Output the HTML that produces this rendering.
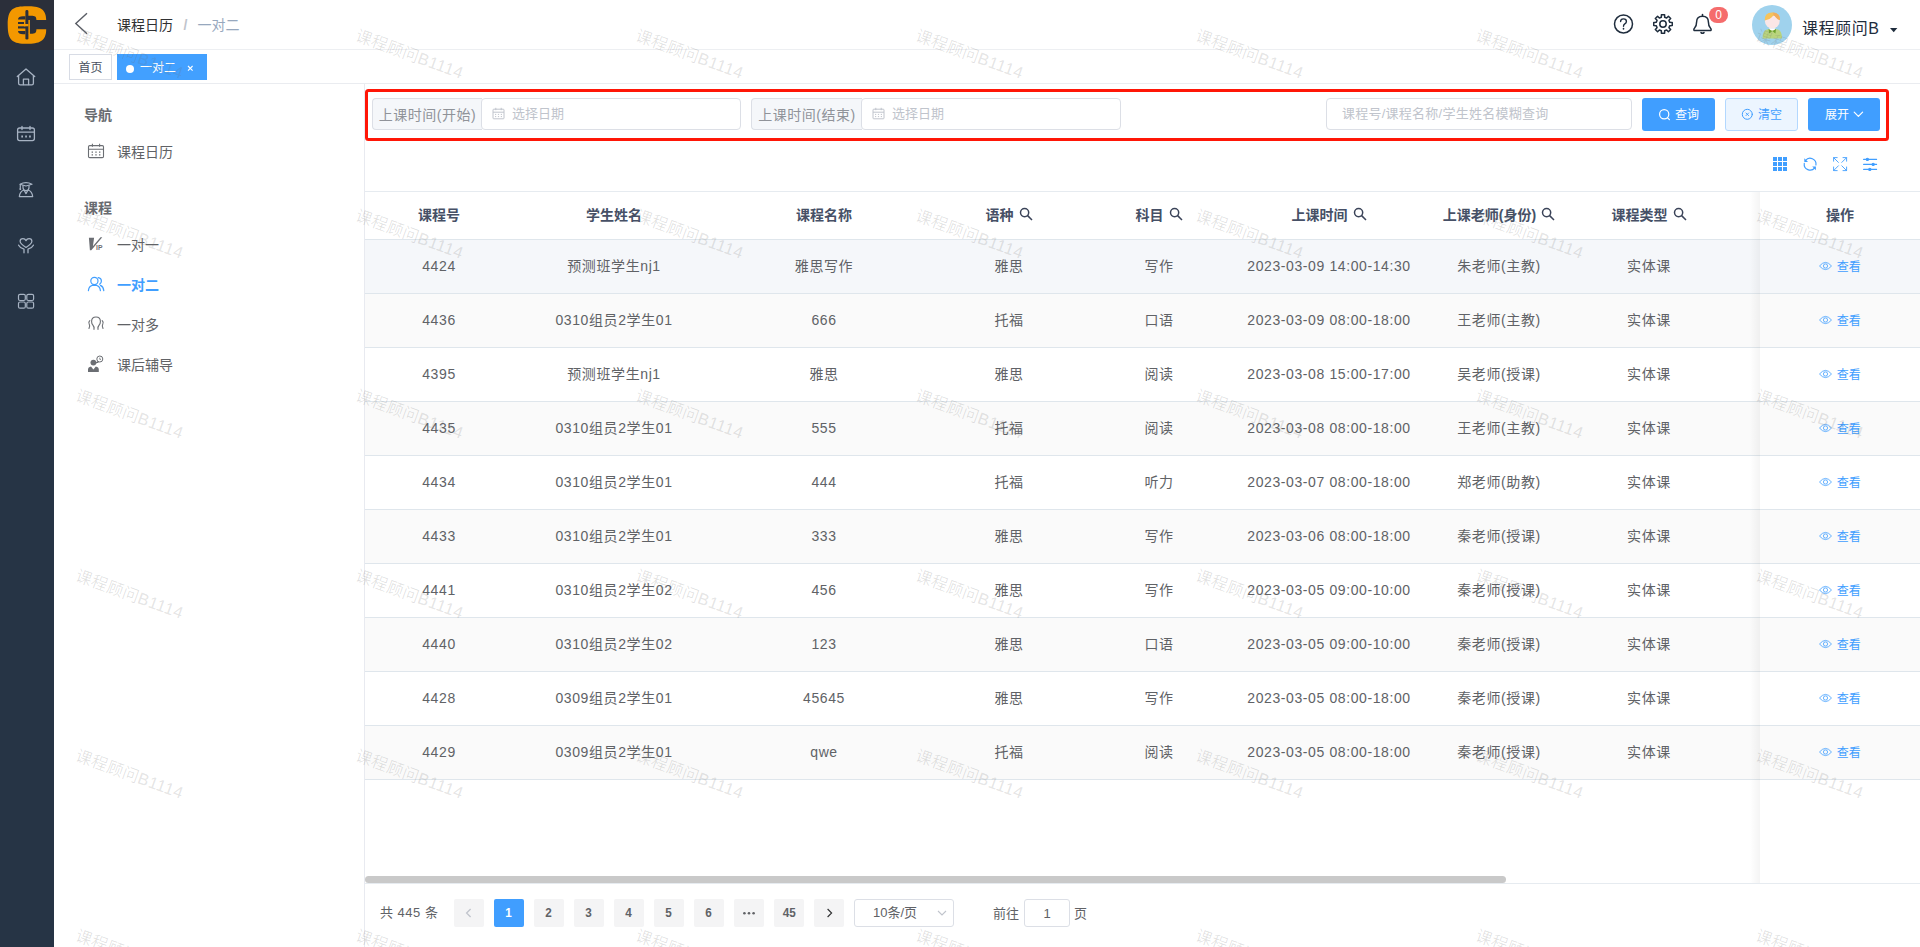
<!DOCTYPE html><html lang="zh-CN"><head><meta charset="utf-8"><title>一对二</title><style>
*{box-sizing:border-box;margin:0;padding:0}
html,body{width:1920px;height:947px;overflow:hidden;background:#fff}
body{position:relative;font-family:"Liberation Sans", "Noto Sans CJK SC", sans-serif;font-size:14px;color:#606266;-webkit-font-smoothing:antialiased}
.a{position:absolute}
.t{position:absolute;white-space:nowrap}
svg{position:absolute;overflow:visible}
.wm{position:absolute;white-space:nowrap;font-size:16.4px;line-height:17px;height:17px;color:rgba(110,110,110,.235);font-weight:300;letter-spacing:.2px;transform-origin:0 0;transform:rotate(20deg);pointer-events:none;z-index:50}
.th{position:absolute;top:192px;height:47px;line-height:47px;font-size:14px;font-weight:700;color:#465066;text-align:center;white-space:nowrap}
.td{position:absolute;height:53px;line-height:53px;font-size:14px;color:#606266;text-align:center;white-space:nowrap;letter-spacing:.6px}
.row{position:absolute;left:365px;width:1555px;height:54px;border-bottom:1px solid #dfe6ec}
.pg{position:absolute;top:899px;width:30px;height:28px;line-height:28px;background:#f4f4f5;border-radius:2px;text-align:center;font-size:13px;font-weight:700;color:#606266}
.mi{position:absolute;left:117px;font-size:14px;line-height:20px;height:20px;color:#606266;white-space:nowrap}
</style></head><body>
<div class="a" style="left:0;top:0;width:54px;height:947px;background:#263445"></div>
<div class="a" style="left:0;top:0;width:54px;height:50px;background:#2b2f3a"></div>
<svg style="left:0;top:0" width="54" height="50" viewBox="0 0 54 50">
<path d="M27 6.3 C39 6.3 46.2 8.5 46.2 20 L36.4 20 C36.4 16.5 35 15.8 31 15.8 L26 15.8 L26 33.8 L31 33.8 C35 33.8 36.4 33 36.4 29.3 L46.2 29.3 C46.2 41.5 39 43.8 27 43.8 C13 43.8 7.7 41 7.7 25 C7.7 9 13 6.3 27 6.3 Z" fill="#f39800"/>
<rect x="25.4" y="10" width="3" height="29.6" rx="1.4" fill="#2b2f3a"/>
<path d="M18 19.5 C18 17 20 16.2 23 16.2 L25.4 16.2 L25.4 19.5 Z" fill="#2b2f3a"/>
<rect x="18" y="22" width="6" height="2" fill="#2b2f3a"/>
<rect x="18" y="26.3" width="9" height="2.2" fill="#2b2f3a"/>
<path d="M18 31 L25.4 31 L25.4 34.2 L23 34.2 C20 34.2 18 33.2 18 31 Z" fill="#2b2f3a"/>
<rect x="28.4" y="20" width="1.5" height="14" fill="#f39800"/>
<rect x="24" y="24" width="4.4" height="2.3" fill="#f39800"/>
</svg>
<svg style="left:16px;top:67px" width="20" height="20" viewBox="16 67 20 20" fill="none" stroke="#a7b3c3" stroke-width="1.3" stroke-linecap="round" stroke-linejoin="round">
<path d="M17.3 76.6 L26 69 L34.7 76.6"/>
<path d="M18.6 75.8 L18.6 83.2 Q18.6 84.8 20.2 84.8 L31.8 84.8 Q33.4 84.8 33.4 83.2 L33.4 75.8"/>
<path d="M23.4 84.6 L23.4 79.2 L28.6 79.2 L28.6 84.6"/>
</svg>
<svg style="left:16px;top:124px" width="20" height="20" viewBox="16 124 20 20" fill="none" stroke="#a7b3c3" stroke-width="1.3" stroke-linecap="round" stroke-linejoin="round">
<rect x="17.6" y="128" width="16.8" height="12.6" rx="2"/>
<path d="M17.6 132.2 L34.4 132.2 M22 126.3 L22 129.6 M30 126.3 L30 129.6"/>
<path d="M21.3 136.5 L23 136.5 M25.2 136.5 L26.9 136.5 M29.1 136.5 L30.8 136.5" stroke-width="1.8" stroke-linecap="butt"/>
</svg>
<svg style="left:16px;top:179px" width="20" height="20" viewBox="16 179 20 20" fill="none" stroke="#a7b3c3" stroke-width="1.2" stroke-linecap="round" stroke-linejoin="round">
<path d="M20 184.2 Q26 181.2 32 184.2 L26 186 Z"/>
<path d="M20.3 184.4 L20.3 188.2" /><rect x="19.5" y="188.2" width="1.6" height="1.8" fill="#a7b3c3" stroke="none"/>
<path d="M23 185.6 L23 187.5 Q23 190.6 26 190.6 Q29 190.6 29 187.5 L29 185.6"/>
<path d="M19.3 196.6 Q19.8 191.4 24 190 L26 193.6 L28 190 Q32.2 191.4 32.7 196.6 Z"/>
</svg>
<svg style="left:16px;top:235px" width="20" height="20" viewBox="16 235 20 20" fill="none" stroke="#a7b3c3" stroke-width="1.3" stroke-linecap="round" stroke-linejoin="round">
<path transform="translate(1.3 13) scale(.95)" d="M26 246.8 C21.4 243.8 19.8 242 19.8 240.2 C19.8 238.4 21.2 237.6 22.8 237.6 C24.2 237.6 25.4 238.4 26 239.6 C26.6 238.4 27.8 237.6 29.2 237.6 C30.8 237.6 32.2 238.4 32.2 240.2 C32.2 242 30.6 243.8 26 246.8 Z"/>
<path d="M18.6 245.2 C19.8 247.6 22 248.6 24 249.2 L24 252.8"/>
<path d="M33.4 245.2 C32.2 247.6 30 248.6 28 249.2 L28 252.8"/>
</svg>
<svg style="left:16px;top:291px" width="20" height="20" viewBox="16 291 20 20" fill="none" stroke="#a7b3c3" stroke-width="1.2">
<rect x="18.5" y="294.3" width="6.8" height="6.2" rx="1.5"/><rect x="26.8" y="294.3" width="6.8" height="6.2" rx="1.5"/>
<rect x="18.5" y="302" width="6.8" height="6.2" rx="1.5"/><rect x="26.8" y="302" width="6.8" height="6.2" rx="1.5"/>
</svg>
<div class="a" style="left:54px;top:49px;width:1866px;height:1px;background:#edeff2"></div>
<svg style="left:70px;top:8px" width="24" height="32" viewBox="70 8 24 32" fill="none" stroke="#5a5e66" stroke-width="1.4"><path d="M87 13.2 L75.8 23.5 L87 33.8"/></svg>
<div class="t" style="left:117px;top:15px;height:20px;line-height:20px;font-size:14px;color:#303133">课程日历</div>
<div class="t" style="left:183.5px;top:15px;height:20px;line-height:20px;font-size:14px;font-weight:700;color:#c0c4cc">/</div>
<div class="t" style="left:197.5px;top:15px;height:20px;line-height:20px;font-size:14px;color:#97a8be">一对二</div>
<svg style="left:1612px;top:12px" width="24" height="24" viewBox="1612 12 24 24" fill="none" stroke="#1f2d3d" stroke-width="1.5" stroke-linecap="round">
<circle cx="1623.5" cy="24" r="9"/>
<path d="M1620.6 21.6 Q1620.6 18.9 1623.5 18.9 Q1626.4 18.9 1626.4 21.4 Q1626.4 22.8 1624.8 23.8 Q1623.5 24.6 1623.5 26.2" stroke-width="1.4"/>
<path d="M1623.5 28.6 L1623.5 29" stroke-width="1.6"/>
</svg>
<svg style="left:1651px;top:12px" width="24" height="24" viewBox="1651 12 24 24" fill="none" stroke="#1f2d3d" stroke-width="1.5" stroke-linejoin="round">
<path d="M1661.36 17.20 L1661.38 14.74 L1664.62 14.74 L1664.64 17.20 L1666.65 18.03 L1668.41 16.31 L1670.69 18.59 L1668.97 20.35 L1669.80 22.36 L1672.26 22.38 L1672.26 25.62 L1669.80 25.64 L1668.97 27.65 L1670.69 29.41 L1668.41 31.69 L1666.65 29.97 L1664.64 30.80 L1664.62 33.26 L1661.38 33.26 L1661.36 30.80 L1659.35 29.97 L1657.59 31.69 L1655.31 29.41 L1657.03 27.65 L1656.20 25.64 L1653.74 25.62 L1653.74 22.38 L1656.20 22.36 L1657.03 20.35 L1655.31 18.59 L1657.59 16.31 L1659.35 18.03 Z"/><circle cx="1663" cy="24" r="3.2"/>
</svg>
<svg style="left:1690px;top:12px" width="24" height="24" viewBox="1690 12 24 24" fill="none" stroke="#1f2d3d" stroke-width="1.5" stroke-linecap="round" stroke-linejoin="round">
<path d="M1702.5 14.4 L1702.5 16"/>
<path d="M1694 30.4 Q1693.4 29.2 1694.6 28 Q1696.6 26 1696.6 22 Q1696.6 16.2 1702.5 16.2 Q1708.4 16.2 1708.4 22 Q1708.4 26 1710.4 28 Q1711.6 29.2 1711 30.4 Z"/>
<path d="M1701 32.6 Q1702.5 34 1704 32.6"/>
</svg>
<div class="a" style="left:1709px;top:7px;width:19px;height:16px;border-radius:8px;background:#f56c6c;color:#fff;font-size:12px;line-height:16px;text-align:center">0</div>
<svg style="left:1752px;top:5px" width="40" height="40" viewBox="0 0 40 40">
<defs><clipPath id="avc"><circle cx="20" cy="20" r="20"/></clipPath></defs>
<circle cx="20" cy="20" r="20" fill="#9fd2ed"/>
<g clip-path="url(#avc)">
<path d="M10.6 33.5 Q10.6 24.6 16 24.2 L24.6 24.2 Q30 24.6 30 33.5 Z" fill="#b9d47d"/>
<path d="M17.2 23.2 L23.4 23.2 L22.6 26.6 L20.3 25.2 L18 26.6 Z" fill="#fff"/>
<path d="M20.3 26 L16.6 24 L17.2 28.6 Z M20.3 26 L24 24 L23.4 28.6 Z" fill="#6ea22c"/>
<circle cx="20.3" cy="16" r="7.4" fill="#fbe6e6"/>
<path d="M12.7 15.4 Q12.4 7.6 20 7.4 Q28 7.2 28 15 Q25.6 14.8 24 12.4 Q22.8 10.8 21.4 10.6 Q17.8 15 12.7 15.4 Z" fill="#f6c35a"/>
<path d="M20.6 7.4 Q28 7.2 28 15 Q25.6 14.8 24 12.4 Q22.8 10.8 21.4 10.6 Q21.6 9 20.6 7.4 Z" fill="#f1ad5c"/>
</g></svg>
<div class="t" style="left:1802px;top:17.5px;height:22px;line-height:22px;font-size:16px;letter-spacing:.55px;color:#1f2d3d">课程顾问B</div>
<svg style="left:1889px;top:27px" width="10" height="6" viewBox="0 0 10 6"><path d="M1 1 L8.4 1 L4.7 5.2 Z" fill="#1f2d3d"/></svg>
<div class="a" style="left:54px;top:83px;width:1866px;height:1px;background:#eaecf0"></div>
<div class="a" style="left:69px;top:54px;width:43px;height:26px;border:1px solid #d8dce5;background:#fff;color:#495060;font-size:12px;line-height:26px;text-align:center">首页</div>
<div class="a" style="left:117px;top:54px;width:90px;height:26px;background:#42a0ff"></div>
<div class="a" style="left:126px;top:64.5px;width:8px;height:8px;border-radius:50%;background:#fff"></div>
<div class="t" style="left:140px;top:56px;height:24px;line-height:24px;font-size:12px;color:#fff">一对二</div>
<svg style="left:186px;top:64px" width="9" height="9" viewBox="0 0 9 9" stroke="#fff" stroke-width="1.1" fill="none"><path d="M2 2 L6.6 6.6 M6.6 2 L2 6.6"/></svg>
<div class="a" style="left:364px;top:84px;width:1px;height:863px;background:#e8eaf0"></div>
<div class="t" style="left:84px;top:105px;height:20px;line-height:20px;font-size:14px;font-weight:700;color:#686b70">导航</div>
<div class="t" style="left:84px;top:198px;height:20px;line-height:20px;font-size:14px;font-weight:700;color:#686b70">课程</div>
<svg style="left:86px;top:141px" width="20" height="20" viewBox="86 141 20 20" fill="none" stroke="#6b6e73" stroke-width="1.1">
<rect x="88.5" y="145.6" width="15" height="12" rx="1.2"/>
<path d="M88.5 149.3 L103.5 149.3 M92.4 143.8 L92.4 146.8 M99.6 143.8 L99.6 146.8"/>
<path d="M91.6 152.2 L93 152.2 M95.3 152.2 L96.7 152.2 M99 152.2 L100.4 152.2 M91.6 154.9 L93 154.9 M95.3 154.9 L96.7 154.9 M99 154.9 L100.4 154.9" stroke-width="1.2"/>
</svg>
<div class="mi" style="top:141.5px">课程日历</div>
<svg style="left:86px;top:235px" width="20" height="18" viewBox="86 235 20 18">
<path d="M88.9 237.7 L94.1 237.7 L92.9 246.2 L100.5 237.3 L102.3 237.3 L91.3 250.3 L89.9 250.3 Z" fill="#6b6e73"/>
<text x="96" y="250.2" font-size="6.8" font-weight="700" fill="#6b6e73" style="font-family:'Liberation Sans',sans-serif">IP</text>
</svg>
<div class="mi" style="top:235px">一对一</div>
<svg style="left:86px;top:275px" width="20" height="18" viewBox="86 275 20 18" fill="none" stroke="#409eff" stroke-width="1.2" stroke-linecap="round">
<circle cx="94.4" cy="281" r="3.6"/>
<path d="M88.4 290.6 Q88.8 285.4 94.4 285.2 Q100 285.4 100.4 290.6"/>
<path d="M98.2 277.6 Q101.4 278 101.4 281 Q101.4 283.2 99.6 284.2"/>
<path d="M100.4 285.4 Q103.4 286.6 103.8 290.6"/>
</svg>
<div class="mi" style="top:275px;color:#409eff;font-weight:700">一对二</div>
<svg style="left:86px;top:314px" width="20" height="18" viewBox="86 314 20 18" fill="none" stroke="#6b6e73" stroke-width="1.1" stroke-linecap="round">
<path d="M94 329.4 Q94.4 326.6 92.8 325 Q91.6 323.6 91.6 321.4 Q91.6 317 96 317 Q100.4 317 100.4 321.4 Q100.4 323.6 99.2 325 Q97.6 326.6 98 329.4"/>
<path d="M89.8 320.6 Q88.2 322 89.2 324 Q90.4 326 89 328.4"/>
<path d="M102.2 320.6 Q103.8 322 102.8 324 Q101.6 326 103 328.4"/>
</svg>
<div class="mi" style="top:315px">一对多</div>
<svg style="left:86px;top:354px" width="20" height="20" viewBox="86 354 20 20">
<circle cx="93.4" cy="362.6" r="2.9" fill="#6b6e73"/>
<path d="M88 372 L88 369.6 Q88 367 91 366.4 L93.4 369.6 L95.8 366.4 Q98.8 367 98.8 369.6 L98.8 372 Z" fill="#6b6e73"/>
<circle cx="99.8" cy="359" r="3" fill="none" stroke="#6b6e73" stroke-width="1"/>
<path d="M97.6 361.2 L96.2 363 L98.8 362" fill="none" stroke="#6b6e73" stroke-width="1"/>
<path d="M99.8 357.6 L99.8 359.4 L101 359.4" fill="none" stroke="#6b6e73" stroke-width=".8"/>
</svg>
<div class="mi" style="top:355px">课后辅导</div>
<div class="a" style="left:372px;top:98px;width:110px;height:32px;background:#f5f7fa;border:1px solid #dcdfe6;border-right:0;border-radius:4px 0 0 4px;color:#909399;font-size:14px;line-height:33px;text-align:center;white-space:nowrap;letter-spacing:.5px">上课时间(开始)</div>
<div class="a" style="left:481px;top:98px;width:260px;height:32px;background:#fff;border:1px solid #dcdfe6;border-radius:4px"></div>
<svg style="left:492px;top:107px" width="13" height="13" viewBox="0 0 13 13" fill="none" stroke="#c0c4cc" stroke-width="1">
<rect x="1" y="2.2" width="11" height="9.6" rx=".8"/><path d="M1 5.2 L12 5.2 M3.8 .8 L3.8 3.2 M9.2 .8 L9.2 3.2"/>
<path d="M3 7.4 L4.2 7.4 M5.9 7.4 L7.1 7.4 M8.8 7.4 L10 7.4 M3 9.6 L4.2 9.6 M5.9 9.6 L7.1 9.6 M8.8 9.6 L10 9.6" stroke-width="1"/></svg>
<div class="t" style="left:512px;top:104px;height:20px;line-height:20px;font-size:13px;color:#c0c4cc">选择日期</div>
<div class="a" style="left:751px;top:98px;width:111px;height:32px;background:#f5f7fa;border:1px solid #dcdfe6;border-right:0;border-radius:4px 0 0 4px;color:#909399;font-size:14px;line-height:33px;text-align:center;white-space:nowrap;letter-spacing:.5px">上课时间(结束)</div>
<div class="a" style="left:861px;top:98px;width:260px;height:32px;background:#fff;border:1px solid #dcdfe6;border-radius:4px"></div>
<svg style="left:872px;top:107px" width="13" height="13" viewBox="0 0 13 13" fill="none" stroke="#c0c4cc" stroke-width="1">
<rect x="1" y="2.2" width="11" height="9.6" rx=".8"/><path d="M1 5.2 L12 5.2 M3.8 .8 L3.8 3.2 M9.2 .8 L9.2 3.2"/>
<path d="M3 7.4 L4.2 7.4 M5.9 7.4 L7.1 7.4 M8.8 7.4 L10 7.4 M3 9.6 L4.2 9.6 M5.9 9.6 L7.1 9.6 M8.8 9.6 L10 9.6" stroke-width="1"/></svg>
<div class="t" style="left:892px;top:104px;height:20px;line-height:20px;font-size:13px;color:#c0c4cc">选择日期</div>
<div class="a" style="left:1326px;top:98px;width:306px;height:32px;background:#fff;border:1px solid #dcdfe6;border-radius:4px"></div>
<div class="t" style="left:1342px;top:104px;height:20px;line-height:20px;font-size:13px;letter-spacing:.25px;color:#c0c4cc">课程号/课程名称/学生姓名模糊查询</div>
<div class="a" style="left:1642px;top:98px;width:73px;height:33px;background:#409eff;border-radius:3px"></div>
<svg style="left:1658px;top:108px" width="13" height="13" viewBox="0 0 13 13" fill="none" stroke="#fff" stroke-width="1.2" stroke-linecap="round"><circle cx="6.2" cy="6.2" r="4.6"/><path d="M9.6 9.8 L11.4 11.6"/></svg>
<div class="t" style="left:1675px;top:105px;height:20px;line-height:20px;font-size:12px;color:#fff">查询</div>
<div class="a" style="left:1725px;top:98px;width:73px;height:33px;background:#ecf5ff;border:1px solid #b3d8ff;border-radius:3px"></div>
<svg style="left:1741px;top:108px" width="13" height="13" viewBox="0 0 13 13" fill="none" stroke="#409eff" stroke-width="1" stroke-linecap="round"><circle cx="6.3" cy="6.3" r="5"/><path d="M5 5 L7.6 7.6 M7.6 5 L5 7.6" stroke-width=".9"/></svg>
<div class="t" style="left:1758px;top:105px;height:20px;line-height:20px;font-size:12px;color:#409eff">清空</div>
<div class="a" style="left:1808px;top:98px;width:72px;height:33px;background:#409eff;border-radius:3px"></div>
<div class="t" style="left:1825px;top:105px;height:20px;line-height:20px;font-size:12px;color:#fff">展开</div>
<svg style="left:1853px;top:110px" width="11" height="8" viewBox="0 0 11 8" fill="none" stroke="#fff" stroke-width="1.2" stroke-linecap="round" stroke-linejoin="round"><path d="M1.2 2.2 L5.4 6.4 L9.6 2.2"/></svg>
<svg style="left:0;top:0;z-index:60" width="1920" height="947" viewBox="0 0 1920 947" fill="none"><rect x="366.5" y="90.5" width="1521" height="49" rx="2" stroke="#ff1607" stroke-width="3"/></svg>
<svg style="left:0;top:0" width="1920" height="200" viewBox="0 0 1920 200" fill="#409eff"><rect x="1773" y="157" width="4" height="4"/><rect x="1778" y="157" width="4" height="4"/><rect x="1783" y="157" width="4" height="4"/><rect x="1773" y="162" width="4" height="4"/><rect x="1778" y="162" width="4" height="4"/><rect x="1783" y="162" width="4" height="4"/><rect x="1773" y="167" width="4" height="4"/><rect x="1778" y="167" width="4" height="4"/><rect x="1783" y="167" width="4" height="4"/></svg>
<svg style="left:1802px;top:156px" width="16" height="16" viewBox="1802 156 16 16" fill="none" stroke="#409eff" stroke-width="1.15" stroke-linecap="round">
<path d="M1805.45 160.57 A5.9 5.9 0 0 1 1815.94 165.02"/>
<path d="M1804.26 163.38 A5.9 5.9 0 0 0 1814.75 167.83"/>
<path d="M1804.3 158.2 L1804.3 161.9 L1808 161.9 Z" fill="#409eff" stroke="none"/>
<path d="M1812.2 166.5 L1815.9 166.5 L1815.9 170.2 Z" fill="#409eff" stroke="none"/>
</svg>
<svg style="left:1832px;top:156px" width="16" height="16" viewBox="1832 156 16 16" fill="none" stroke="#409eff" stroke-width=".9" stroke-linecap="round">
<path d="M1833.7 157.7 L1838.4 162.4 M1846.5 157.7 L1841.8 162.4 M1833.7 170.5 L1838.4 165.8 M1846.5 170.5 L1841.8 165.8"/>
<path d="M1833.6 161.2 L1833.6 157.6 L1837.2 157.6 M1843 157.6 L1846.6 157.6 L1846.6 161.2 M1833.6 167 L1833.6 170.6 L1837.2 170.6 M1843 170.6 L1846.6 170.6 L1846.6 167"/>
</svg>
<svg style="left:1862px;top:156px" width="16" height="16" viewBox="1862 156 16 16" fill="#409eff" stroke="#409eff" stroke-width="1.1" stroke-linecap="round">
<path d="M1863.6 159.4 L1876.6 159.4 M1863.6 164.4 L1876.6 164.4 M1863.6 169.4 L1876.6 169.4"/>
<circle cx="1867.4" cy="159.4" r="1.1"/><circle cx="1873.2" cy="164.4" r="1.1"/><circle cx="1869.8" cy="169.4" r="1.1"/>
</svg>
<div class="a" style="left:365px;top:191px;width:1555px;height:1px;background:#e6ebf0"></div>
<div class="a" style="left:365px;top:239px;width:1555px;height:1px;background:#dfe6ec"></div>
<div class="row" style="top:240px;background:#f5f7fa"></div>
<div class="row" style="top:294px;background:#fafafa"></div>
<div class="row" style="top:348px;background:#fff"></div>
<div class="row" style="top:402px;background:#fafafa"></div>
<div class="row" style="top:456px;background:#fff"></div>
<div class="row" style="top:510px;background:#fafafa"></div>
<div class="row" style="top:564px;background:#fff"></div>
<div class="row" style="top:618px;background:#fafafa"></div>
<div class="row" style="top:672px;background:#fff"></div>
<div class="row" style="top:726px;background:#fafafa"></div>
<div class="th" style="left:364px;width:150px">课程号</div>
<div class="td" style="left:364px;top:240px;width:150px">4424</div>
<div class="td" style="left:364px;top:294px;width:150px">4436</div>
<div class="td" style="left:364px;top:348px;width:150px">4395</div>
<div class="td" style="left:364px;top:402px;width:150px">4435</div>
<div class="td" style="left:364px;top:456px;width:150px">4434</div>
<div class="td" style="left:364px;top:510px;width:150px">4433</div>
<div class="td" style="left:364px;top:564px;width:150px">4441</div>
<div class="td" style="left:364px;top:618px;width:150px">4440</div>
<div class="td" style="left:364px;top:672px;width:150px">4428</div>
<div class="td" style="left:364px;top:726px;width:150px">4429</div>
<div class="th" style="left:514px;width:200px">学生姓名</div>
<div class="td" style="left:514px;top:240px;width:200px">预测班学生nj1</div>
<div class="td" style="left:514px;top:294px;width:200px">0310组员2学生01</div>
<div class="td" style="left:514px;top:348px;width:200px">预测班学生nj1</div>
<div class="td" style="left:514px;top:402px;width:200px">0310组员2学生01</div>
<div class="td" style="left:514px;top:456px;width:200px">0310组员2学生01</div>
<div class="td" style="left:514px;top:510px;width:200px">0310组员2学生01</div>
<div class="td" style="left:514px;top:564px;width:200px">0310组员2学生02</div>
<div class="td" style="left:514px;top:618px;width:200px">0310组员2学生02</div>
<div class="td" style="left:514px;top:672px;width:200px">0309组员2学生01</div>
<div class="td" style="left:514px;top:726px;width:200px">0309组员2学生01</div>
<div class="th" style="left:714px;width:220px">课程名称</div>
<div class="td" style="left:714px;top:240px;width:220px">雅思写作</div>
<div class="td" style="left:714px;top:294px;width:220px">666</div>
<div class="td" style="left:714px;top:348px;width:220px">雅思</div>
<div class="td" style="left:714px;top:402px;width:220px">555</div>
<div class="td" style="left:714px;top:456px;width:220px">444</div>
<div class="td" style="left:714px;top:510px;width:220px">333</div>
<div class="td" style="left:714px;top:564px;width:220px">456</div>
<div class="td" style="left:714px;top:618px;width:220px">123</div>
<div class="td" style="left:714px;top:672px;width:220px">45645</div>
<div class="td" style="left:714px;top:726px;width:220px">qwe</div>
<div class="th" style="left:934px;width:150px">语种<svg style="position:relative;display:inline-block;vertical-align:middle;margin-left:5px;top:-2.5px" width="14" height="14" viewBox="0 0 14 14" fill="none" stroke="#3a4358" stroke-width="1.5"><circle cx="5.6" cy="5.6" r="4.1"/><path d="M8.6 8.6 L13 13"/></svg></div>
<div class="td" style="left:934px;top:240px;width:150px">雅思</div>
<div class="td" style="left:934px;top:294px;width:150px">托福</div>
<div class="td" style="left:934px;top:348px;width:150px">雅思</div>
<div class="td" style="left:934px;top:402px;width:150px">托福</div>
<div class="td" style="left:934px;top:456px;width:150px">托福</div>
<div class="td" style="left:934px;top:510px;width:150px">雅思</div>
<div class="td" style="left:934px;top:564px;width:150px">雅思</div>
<div class="td" style="left:934px;top:618px;width:150px">雅思</div>
<div class="td" style="left:934px;top:672px;width:150px">雅思</div>
<div class="td" style="left:934px;top:726px;width:150px">托福</div>
<div class="th" style="left:1084px;width:150px">科目<svg style="position:relative;display:inline-block;vertical-align:middle;margin-left:5px;top:-2.5px" width="14" height="14" viewBox="0 0 14 14" fill="none" stroke="#3a4358" stroke-width="1.5"><circle cx="5.6" cy="5.6" r="4.1"/><path d="M8.6 8.6 L13 13"/></svg></div>
<div class="td" style="left:1084px;top:240px;width:150px">写作</div>
<div class="td" style="left:1084px;top:294px;width:150px">口语</div>
<div class="td" style="left:1084px;top:348px;width:150px">阅读</div>
<div class="td" style="left:1084px;top:402px;width:150px">阅读</div>
<div class="td" style="left:1084px;top:456px;width:150px">听力</div>
<div class="td" style="left:1084px;top:510px;width:150px">写作</div>
<div class="td" style="left:1084px;top:564px;width:150px">写作</div>
<div class="td" style="left:1084px;top:618px;width:150px">口语</div>
<div class="td" style="left:1084px;top:672px;width:150px">写作</div>
<div class="td" style="left:1084px;top:726px;width:150px">阅读</div>
<div class="th" style="left:1234px;width:190px">上课时间<svg style="position:relative;display:inline-block;vertical-align:middle;margin-left:5px;top:-2.5px" width="14" height="14" viewBox="0 0 14 14" fill="none" stroke="#3a4358" stroke-width="1.5"><circle cx="5.6" cy="5.6" r="4.1"/><path d="M8.6 8.6 L13 13"/></svg></div>
<div class="td" style="left:1234px;top:240px;width:190px">2023-03-09 14:00-14:30</div>
<div class="td" style="left:1234px;top:294px;width:190px">2023-03-09 08:00-18:00</div>
<div class="td" style="left:1234px;top:348px;width:190px">2023-03-08 15:00-17:00</div>
<div class="td" style="left:1234px;top:402px;width:190px">2023-03-08 08:00-18:00</div>
<div class="td" style="left:1234px;top:456px;width:190px">2023-03-07 08:00-18:00</div>
<div class="td" style="left:1234px;top:510px;width:190px">2023-03-06 08:00-18:00</div>
<div class="td" style="left:1234px;top:564px;width:190px">2023-03-05 09:00-10:00</div>
<div class="td" style="left:1234px;top:618px;width:190px">2023-03-05 09:00-10:00</div>
<div class="td" style="left:1234px;top:672px;width:190px">2023-03-05 08:00-18:00</div>
<div class="td" style="left:1234px;top:726px;width:190px">2023-03-05 08:00-18:00</div>
<div class="th" style="left:1424px;width:150px">上课老师(身份)<svg style="position:relative;display:inline-block;vertical-align:middle;margin-left:5px;top:-2.5px" width="14" height="14" viewBox="0 0 14 14" fill="none" stroke="#3a4358" stroke-width="1.5"><circle cx="5.6" cy="5.6" r="4.1"/><path d="M8.6 8.6 L13 13"/></svg></div>
<div class="td" style="left:1424px;top:240px;width:150px">朱老师(主教)</div>
<div class="td" style="left:1424px;top:294px;width:150px">王老师(主教)</div>
<div class="td" style="left:1424px;top:348px;width:150px">吴老师(授课)</div>
<div class="td" style="left:1424px;top:402px;width:150px">王老师(主教)</div>
<div class="td" style="left:1424px;top:456px;width:150px">郑老师(助教)</div>
<div class="td" style="left:1424px;top:510px;width:150px">秦老师(授课)</div>
<div class="td" style="left:1424px;top:564px;width:150px">秦老师(授课)</div>
<div class="td" style="left:1424px;top:618px;width:150px">秦老师(授课)</div>
<div class="td" style="left:1424px;top:672px;width:150px">秦老师(授课)</div>
<div class="td" style="left:1424px;top:726px;width:150px">秦老师(授课)</div>
<div class="th" style="left:1574px;width:150px">课程类型<svg style="position:relative;display:inline-block;vertical-align:middle;margin-left:5px;top:-2.5px" width="14" height="14" viewBox="0 0 14 14" fill="none" stroke="#3a4358" stroke-width="1.5"><circle cx="5.6" cy="5.6" r="4.1"/><path d="M8.6 8.6 L13 13"/></svg></div>
<div class="td" style="left:1574px;top:240px;width:150px">实体课</div>
<div class="td" style="left:1574px;top:294px;width:150px">实体课</div>
<div class="td" style="left:1574px;top:348px;width:150px">实体课</div>
<div class="td" style="left:1574px;top:402px;width:150px">实体课</div>
<div class="td" style="left:1574px;top:456px;width:150px">实体课</div>
<div class="td" style="left:1574px;top:510px;width:150px">实体课</div>
<div class="td" style="left:1574px;top:564px;width:150px">实体课</div>
<div class="td" style="left:1574px;top:618px;width:150px">实体课</div>
<div class="td" style="left:1574px;top:672px;width:150px">实体课</div>
<div class="td" style="left:1574px;top:726px;width:150px">实体课</div>
<div class="a" style="left:1750px;top:192px;width:10px;height:692px;background:linear-gradient(90deg,rgba(0,0,0,0),rgba(0,0,0,.045))"></div>
<div class="a" style="left:1760px;top:192px;width:160px;height:47px;background:#fff"></div>
<div class="a" style="left:1760px;top:780px;width:160px;height:103px;background:#fff"></div>
<div class="th" style="left:1760px;width:160px">操作</div>
<div class="td" style="left:1760px;top:240px;width:160px;font-size:12px;color:#409eff;letter-spacing:0;line-height:55px"><svg style="position:relative;display:inline-block;vertical-align:middle;margin-right:4.5px;top:-1.5px" width="13" height="10" viewBox="0 0 13 10" fill="none" stroke="#409eff" stroke-width=".8"><path d="M.5 5 Q6.5 -2.2 12.5 5 Q6.5 12.2 .5 5 Z"/><circle cx="6.5" cy="5" r="2.1"/></svg>查看</div>
<div class="td" style="left:1760px;top:294px;width:160px;font-size:12px;color:#409eff;letter-spacing:0;line-height:55px"><svg style="position:relative;display:inline-block;vertical-align:middle;margin-right:4.5px;top:-1.5px" width="13" height="10" viewBox="0 0 13 10" fill="none" stroke="#409eff" stroke-width=".8"><path d="M.5 5 Q6.5 -2.2 12.5 5 Q6.5 12.2 .5 5 Z"/><circle cx="6.5" cy="5" r="2.1"/></svg>查看</div>
<div class="td" style="left:1760px;top:348px;width:160px;font-size:12px;color:#409eff;letter-spacing:0;line-height:55px"><svg style="position:relative;display:inline-block;vertical-align:middle;margin-right:4.5px;top:-1.5px" width="13" height="10" viewBox="0 0 13 10" fill="none" stroke="#409eff" stroke-width=".8"><path d="M.5 5 Q6.5 -2.2 12.5 5 Q6.5 12.2 .5 5 Z"/><circle cx="6.5" cy="5" r="2.1"/></svg>查看</div>
<div class="td" style="left:1760px;top:402px;width:160px;font-size:12px;color:#409eff;letter-spacing:0;line-height:55px"><svg style="position:relative;display:inline-block;vertical-align:middle;margin-right:4.5px;top:-1.5px" width="13" height="10" viewBox="0 0 13 10" fill="none" stroke="#409eff" stroke-width=".8"><path d="M.5 5 Q6.5 -2.2 12.5 5 Q6.5 12.2 .5 5 Z"/><circle cx="6.5" cy="5" r="2.1"/></svg>查看</div>
<div class="td" style="left:1760px;top:456px;width:160px;font-size:12px;color:#409eff;letter-spacing:0;line-height:55px"><svg style="position:relative;display:inline-block;vertical-align:middle;margin-right:4.5px;top:-1.5px" width="13" height="10" viewBox="0 0 13 10" fill="none" stroke="#409eff" stroke-width=".8"><path d="M.5 5 Q6.5 -2.2 12.5 5 Q6.5 12.2 .5 5 Z"/><circle cx="6.5" cy="5" r="2.1"/></svg>查看</div>
<div class="td" style="left:1760px;top:510px;width:160px;font-size:12px;color:#409eff;letter-spacing:0;line-height:55px"><svg style="position:relative;display:inline-block;vertical-align:middle;margin-right:4.5px;top:-1.5px" width="13" height="10" viewBox="0 0 13 10" fill="none" stroke="#409eff" stroke-width=".8"><path d="M.5 5 Q6.5 -2.2 12.5 5 Q6.5 12.2 .5 5 Z"/><circle cx="6.5" cy="5" r="2.1"/></svg>查看</div>
<div class="td" style="left:1760px;top:564px;width:160px;font-size:12px;color:#409eff;letter-spacing:0;line-height:55px"><svg style="position:relative;display:inline-block;vertical-align:middle;margin-right:4.5px;top:-1.5px" width="13" height="10" viewBox="0 0 13 10" fill="none" stroke="#409eff" stroke-width=".8"><path d="M.5 5 Q6.5 -2.2 12.5 5 Q6.5 12.2 .5 5 Z"/><circle cx="6.5" cy="5" r="2.1"/></svg>查看</div>
<div class="td" style="left:1760px;top:618px;width:160px;font-size:12px;color:#409eff;letter-spacing:0;line-height:55px"><svg style="position:relative;display:inline-block;vertical-align:middle;margin-right:4.5px;top:-1.5px" width="13" height="10" viewBox="0 0 13 10" fill="none" stroke="#409eff" stroke-width=".8"><path d="M.5 5 Q6.5 -2.2 12.5 5 Q6.5 12.2 .5 5 Z"/><circle cx="6.5" cy="5" r="2.1"/></svg>查看</div>
<div class="td" style="left:1760px;top:672px;width:160px;font-size:12px;color:#409eff;letter-spacing:0;line-height:55px"><svg style="position:relative;display:inline-block;vertical-align:middle;margin-right:4.5px;top:-1.5px" width="13" height="10" viewBox="0 0 13 10" fill="none" stroke="#409eff" stroke-width=".8"><path d="M.5 5 Q6.5 -2.2 12.5 5 Q6.5 12.2 .5 5 Z"/><circle cx="6.5" cy="5" r="2.1"/></svg>查看</div>
<div class="td" style="left:1760px;top:726px;width:160px;font-size:12px;color:#409eff;letter-spacing:0;line-height:55px"><svg style="position:relative;display:inline-block;vertical-align:middle;margin-right:4.5px;top:-1.5px" width="13" height="10" viewBox="0 0 13 10" fill="none" stroke="#409eff" stroke-width=".8"><path d="M.5 5 Q6.5 -2.2 12.5 5 Q6.5 12.2 .5 5 Z"/><circle cx="6.5" cy="5" r="2.1"/></svg>查看</div>
<div class="a" style="left:365px;top:883px;width:1555px;height:1px;background:#e6ebf0"></div>
<div class="a" style="left:365px;top:876px;width:1141px;height:7px;border-radius:4px;background:#c9c9c9"></div>
<div class="t" style="left:380px;top:903px;height:20px;line-height:20px;font-size:13px;color:#606266;letter-spacing:.5px">共 445 条</div>
<div class="pg" style="left:454px"></div>
<svg style="left:463px;top:907px" width="12" height="12" viewBox="0 0 12 12" fill="none" stroke="#c0c4cc" stroke-width="1.3"><path d="M7.6 2 L3.6 6 L7.6 10"/></svg>
<div class="pg" style="left:494px;background:#409eff;color:#fff;"><span style="display:inline-block;transform:scaleX(.9)">1</span></div>
<div class="pg" style="left:534px;"><span style="display:inline-block;transform:scaleX(.9)">2</span></div>
<div class="pg" style="left:574px;"><span style="display:inline-block;transform:scaleX(.9)">3</span></div>
<div class="pg" style="left:614px;"><span style="display:inline-block;transform:scaleX(.9)">4</span></div>
<div class="pg" style="left:654px;"><span style="display:inline-block;transform:scaleX(.9)">5</span></div>
<div class="pg" style="left:694px;"><span style="display:inline-block;transform:scaleX(.9)">6</span></div>
<div class="pg" style="left:734px;"><span style="display:inline-block;transform:scaleX(.9)"></span></div>
<div class="pg" style="left:774px;"><span style="display:inline-block;transform:scaleX(.9)">45</span></div>
<svg style="left:742px;top:911px" width="14" height="4" viewBox="0 0 14 4" fill="#606266"><circle cx="2.4" cy="2.3" r="1.3"/><circle cx="7" cy="2.3" r="1.3"/><circle cx="11.6" cy="2.3" r="1.3"/></svg>
<div class="pg" style="left:814px"></div>
<svg style="left:823px;top:907px" width="12" height="12" viewBox="0 0 12 12" fill="none" stroke="#303133" stroke-width="1.15"><path d="M4.6 2 L8.6 6 L4.6 10"/></svg>
<div class="a" style="left:854px;top:899px;width:100px;height:28px;border:1px solid #dcdfe6;border-radius:3px;background:#fff"></div>
<div class="t" style="left:873px;top:903px;height:20px;line-height:20px;font-size:13px;color:#606266">10条/页</div>
<svg style="left:936px;top:909px" width="12" height="8" viewBox="0 0 12 8" fill="none" stroke="#c0c4cc" stroke-width="1.1"><path d="M2 2 L6 6 L10 2"/></svg>
<div class="t" style="left:993px;top:904px;height:20px;line-height:20px;font-size:13px;color:#606266">前往</div>
<div class="a" style="left:1024px;top:899px;width:46px;height:28px;border:1px solid #dcdfe6;border-radius:3px;background:#fff;text-align:center;font-size:13px;line-height:28px;color:#606266">1</div>
<div class="t" style="left:1074px;top:904px;height:20px;line-height:20px;font-size:13px;color:#606266">页</div>
<div class="wm" style="left:78.7px;top:27.2px"><span>课程顾问</span><span style="opacity:.78;letter-spacing:.45px">B1114</span></div>
<div class="wm" style="left:358.7px;top:27.2px"><span>课程顾问</span><span style="opacity:.78;letter-spacing:.45px">B1114</span></div>
<div class="wm" style="left:638.7px;top:27.2px"><span>课程顾问</span><span style="opacity:.78;letter-spacing:.45px">B1114</span></div>
<div class="wm" style="left:918.7px;top:27.2px"><span>课程顾问</span><span style="opacity:.78;letter-spacing:.45px">B1114</span></div>
<div class="wm" style="left:1198.7px;top:27.2px"><span>课程顾问</span><span style="opacity:.78;letter-spacing:.45px">B1114</span></div>
<div class="wm" style="left:1478.7px;top:27.2px"><span>课程顾问</span><span style="opacity:.78;letter-spacing:.45px">B1114</span></div>
<div class="wm" style="left:1758.7px;top:27.2px"><span>课程顾问</span><span style="opacity:.78;letter-spacing:.45px">B1114</span></div>
<div class="wm" style="left:78.7px;top:207.2px"><span>课程顾问</span><span style="opacity:.78;letter-spacing:.45px">B1114</span></div>
<div class="wm" style="left:358.7px;top:207.2px"><span>课程顾问</span><span style="opacity:.78;letter-spacing:.45px">B1114</span></div>
<div class="wm" style="left:638.7px;top:207.2px"><span>课程顾问</span><span style="opacity:.78;letter-spacing:.45px">B1114</span></div>
<div class="wm" style="left:918.7px;top:207.2px"><span>课程顾问</span><span style="opacity:.78;letter-spacing:.45px">B1114</span></div>
<div class="wm" style="left:1198.7px;top:207.2px"><span>课程顾问</span><span style="opacity:.78;letter-spacing:.45px">B1114</span></div>
<div class="wm" style="left:1478.7px;top:207.2px"><span>课程顾问</span><span style="opacity:.78;letter-spacing:.45px">B1114</span></div>
<div class="wm" style="left:1758.7px;top:207.2px"><span>课程顾问</span><span style="opacity:.78;letter-spacing:.45px">B1114</span></div>
<div class="wm" style="left:78.7px;top:387.2px"><span>课程顾问</span><span style="opacity:.78;letter-spacing:.45px">B1114</span></div>
<div class="wm" style="left:358.7px;top:387.2px"><span>课程顾问</span><span style="opacity:.78;letter-spacing:.45px">B1114</span></div>
<div class="wm" style="left:638.7px;top:387.2px"><span>课程顾问</span><span style="opacity:.78;letter-spacing:.45px">B1114</span></div>
<div class="wm" style="left:918.7px;top:387.2px"><span>课程顾问</span><span style="opacity:.78;letter-spacing:.45px">B1114</span></div>
<div class="wm" style="left:1198.7px;top:387.2px"><span>课程顾问</span><span style="opacity:.78;letter-spacing:.45px">B1114</span></div>
<div class="wm" style="left:1478.7px;top:387.2px"><span>课程顾问</span><span style="opacity:.78;letter-spacing:.45px">B1114</span></div>
<div class="wm" style="left:1758.7px;top:387.2px"><span>课程顾问</span><span style="opacity:.78;letter-spacing:.45px">B1114</span></div>
<div class="wm" style="left:78.7px;top:567.2px"><span>课程顾问</span><span style="opacity:.78;letter-spacing:.45px">B1114</span></div>
<div class="wm" style="left:358.7px;top:567.2px"><span>课程顾问</span><span style="opacity:.78;letter-spacing:.45px">B1114</span></div>
<div class="wm" style="left:638.7px;top:567.2px"><span>课程顾问</span><span style="opacity:.78;letter-spacing:.45px">B1114</span></div>
<div class="wm" style="left:918.7px;top:567.2px"><span>课程顾问</span><span style="opacity:.78;letter-spacing:.45px">B1114</span></div>
<div class="wm" style="left:1198.7px;top:567.2px"><span>课程顾问</span><span style="opacity:.78;letter-spacing:.45px">B1114</span></div>
<div class="wm" style="left:1478.7px;top:567.2px"><span>课程顾问</span><span style="opacity:.78;letter-spacing:.45px">B1114</span></div>
<div class="wm" style="left:1758.7px;top:567.2px"><span>课程顾问</span><span style="opacity:.78;letter-spacing:.45px">B1114</span></div>
<div class="wm" style="left:78.7px;top:747.2px"><span>课程顾问</span><span style="opacity:.78;letter-spacing:.45px">B1114</span></div>
<div class="wm" style="left:358.7px;top:747.2px"><span>课程顾问</span><span style="opacity:.78;letter-spacing:.45px">B1114</span></div>
<div class="wm" style="left:638.7px;top:747.2px"><span>课程顾问</span><span style="opacity:.78;letter-spacing:.45px">B1114</span></div>
<div class="wm" style="left:918.7px;top:747.2px"><span>课程顾问</span><span style="opacity:.78;letter-spacing:.45px">B1114</span></div>
<div class="wm" style="left:1198.7px;top:747.2px"><span>课程顾问</span><span style="opacity:.78;letter-spacing:.45px">B1114</span></div>
<div class="wm" style="left:1478.7px;top:747.2px"><span>课程顾问</span><span style="opacity:.78;letter-spacing:.45px">B1114</span></div>
<div class="wm" style="left:1758.7px;top:747.2px"><span>课程顾问</span><span style="opacity:.78;letter-spacing:.45px">B1114</span></div>
<div class="wm" style="left:78.7px;top:927.2px"><span>课程顾问</span><span style="opacity:.78;letter-spacing:.45px">B1114</span></div>
<div class="wm" style="left:358.7px;top:927.2px"><span>课程顾问</span><span style="opacity:.78;letter-spacing:.45px">B1114</span></div>
<div class="wm" style="left:638.7px;top:927.2px"><span>课程顾问</span><span style="opacity:.78;letter-spacing:.45px">B1114</span></div>
<div class="wm" style="left:918.7px;top:927.2px"><span>课程顾问</span><span style="opacity:.78;letter-spacing:.45px">B1114</span></div>
<div class="wm" style="left:1198.7px;top:927.2px"><span>课程顾问</span><span style="opacity:.78;letter-spacing:.45px">B1114</span></div>
<div class="wm" style="left:1478.7px;top:927.2px"><span>课程顾问</span><span style="opacity:.78;letter-spacing:.45px">B1114</span></div>
<div class="wm" style="left:1758.7px;top:927.2px"><span>课程顾问</span><span style="opacity:.78;letter-spacing:.45px">B1114</span></div>
</body></html>
